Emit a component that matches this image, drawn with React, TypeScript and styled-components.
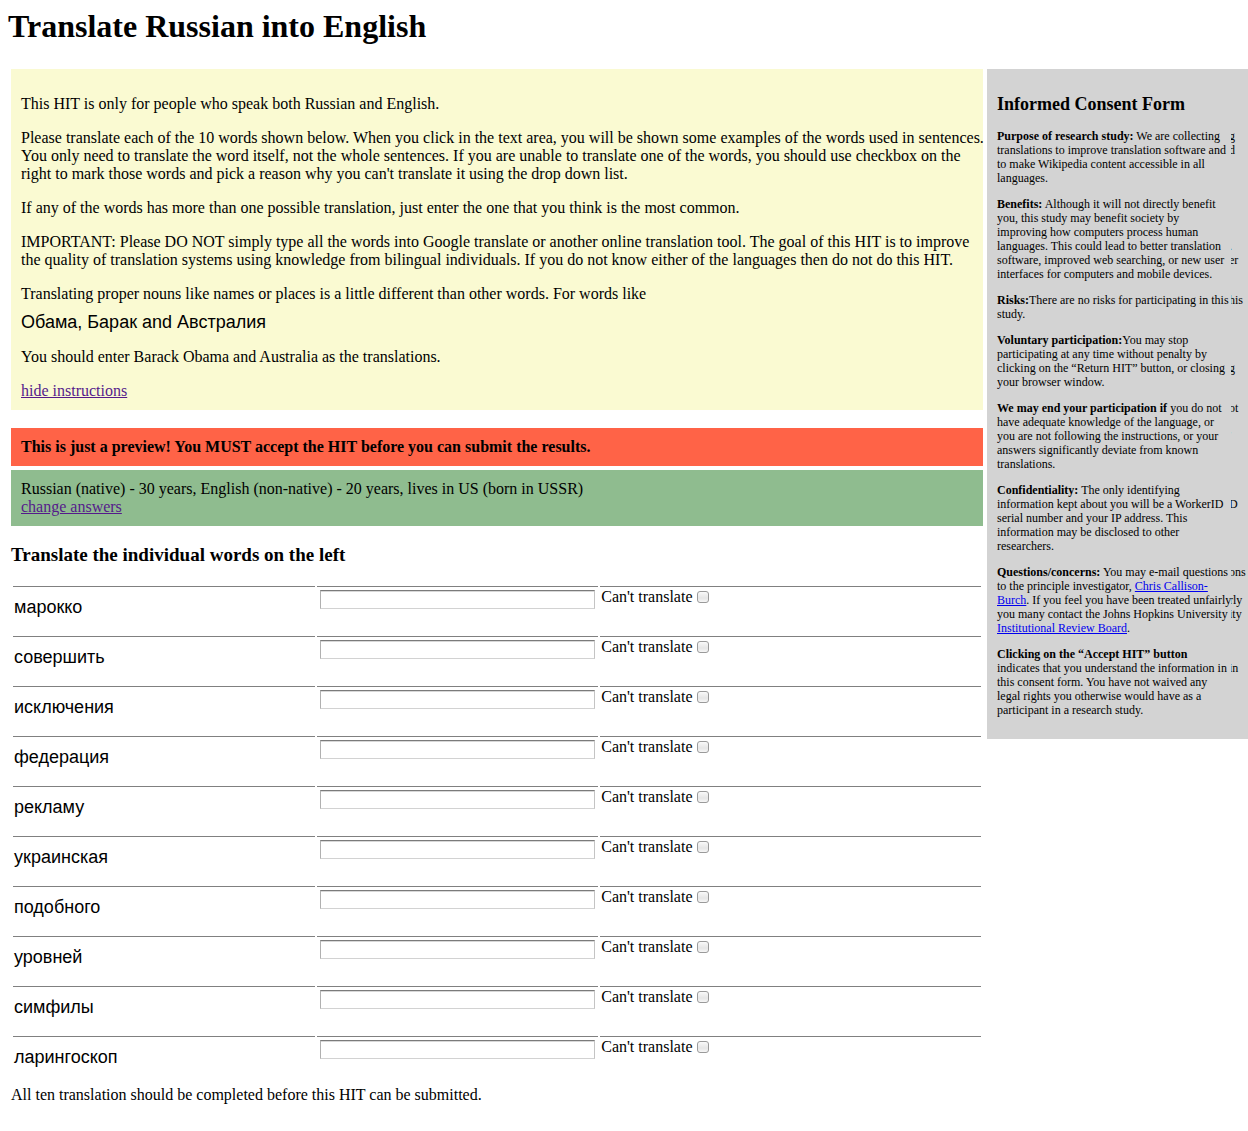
import React from "react";
import styled, { createGlobalStyle } from "styled-components";

const serif = '"Liberation Serif", "Times New Roman", Times, serif';
const sans = '"Liberation Sans", Arial, Helvetica, sans-serif';

const GlobalStyle = createGlobalStyle`
  *, *::before, *::after { box-sizing: border-box; }
  body {
    margin: 0;
    background: #fff;
    color: #000;
    font: 16px/18px ${serif};
  }
`;

const Page = styled.div`
  padding: 8px 0 27px 8px;
`;

const Title = styled.h1`
  margin: 0 0 24px;
  font-size: 32px;
  line-height: 37px;
`;

const Columns = styled.div`
  display: flex;
  align-items: flex-start;
  gap: 4px;
  padding-left: 3px;
`;

const Main = styled.main`
  flex: 1;
  min-width: 0;
`;

const Panel = styled.section<{ $color: string; $gap?: number }>`
  margin-bottom: ${(p) => p.$gap ?? 0}px;
  padding: 10px;
  background: ${(p) => p.$color};
`;

const Instructions = styled(Panel)`
  padding-top: 26px;
  padding-right: 0;
`;

const Paragraph = styled.p`
  margin: 0 -5px 16px 0;
`;

const Examples = styled.p`
  margin: 8px 0 14px;
  font: 18px/23px ${sans};
`;

const Lead = styled.p`
  margin: 0;
`;

const VisitedLink = styled.a`
  color: #551a8b;
`;

const Link = styled.a`
  color: #0000ee;
`;

const Subheading = styled.h3`
  margin: 18px 0;
  font-size: 19px;
  line-height: 22px;
`;

const WordTable = styled.table`
  width: 100%;
  table-layout: fixed;
  border-collapse: separate;
  border-spacing: 2px;
`;

const WordColumn = styled.col`
  width: 31.3%;
`;

const EntryColumn = styled.col`
  width: 29.2%;
`;

const Cell = styled.td`
  height: 48px;
  padding: 1px;
  border-top: 1px solid #808080;
  vertical-align: top;
`;

const WordCell = styled.th`
  height: 48px;
  padding: 10px 1px 0;
  border-top: 1px solid #808080;
  font: 18px/21px ${sans};
  text-align: left;
  vertical-align: top;
`;

const Entry = styled.input`
  display: block;
  width: calc(100% - 4px);
  height: 19px;
  margin: 2px;
  padding: 1px;
  border: 1px solid;
  border-color: #7b7b7b #c4c4c4 #d2d2d2 #b0b0b0;
  border-radius: 0;
  background: #fff;
  box-shadow: inset 0 1px 0 #d8d8d8;
  font: 11px/13px ${sans};
  outline: none;
`;

const CheckLabel = styled.label`
  display: flex;
  align-items: center;
  gap: 4px;
`;

const Check = styled.input`
  appearance: none;
  width: 12px;
  height: 12px;
  margin: 0;
  border: 1px solid #9a9a9a;
  border-radius: 3px;
  background: linear-gradient(#fafafa, #e6e6e6 60%, #f6f6f6);

  &:checked {
    background: #5a8fd8;
  }
`;

const Consent = styled.aside`
  position: relative;
  flex: 0 0 261px;
  padding: 25px 15px 10px 10px;
  background: #d3d3d3;
  font-size: 12px;
  line-height: 14px;
`;

const ConsentTitle = styled.h2`
  margin: 0 0 14px;
  font-size: 18px;
  line-height: 21px;
`;

const ConsentText = styled.p`
  margin: 0 0 12px;
`;

const EdgeStrip = styled.div`
  position: absolute;
  inset: 60px 0 0 auto;
  width: 17px;
  overflow: hidden;
  background: #d3d3d3;
  text-indent: -2px;
`;

const EdgeBlock = styled.div`
  margin-bottom: 12px;
`;

const EdgeLine = styled.div`
  height: 14px;
`;

const words = [
  "марокко",
  "совершить",
  "исключения",
  "федерация",
  "рекламу",
  "украинская",
  "подобного",
  "уровней",
  "симфилы",
  "ларингоскоп",
];

const edgeText = [
  ["g", "d", "", ""],
  ["", "", "", " .", "er", ""],
  ["his", ""],
  ["", "", "g", ""],
  ["ot", "", " '", "", ""],
  ["", "D", "", "", ""],
  ["ons", "", "rly", "ity", ""],
  ["", "in", "", "", ""],
];

function WordRow({ word, id }: { word: string; id: string }) {
  return (
    <tr>
      <WordCell scope="row">
        <label htmlFor={id}>{word}</label>
      </WordCell>
      <Cell>
        <Entry id={id} type="text" />
      </Cell>
      <Cell>
        <CheckLabel>
          Can't translate
          <Check type="checkbox" />
        </CheckLabel>
      </Cell>
    </tr>
  );
}

function ConsentForm() {
  return (
    <Consent>
      <ConsentTitle>Informed Consent Form</ConsentTitle>
      <ConsentText>
        <b>Purpose of research study:</b> We are collecting translations to improve translation
        software and to make Wikipedia content accessible in all languages.
      </ConsentText>
      <ConsentText>
        <b>Benefits:</b> Although it will not directly benefit you, this study may benefit society by
        <br />
        improving how computers process human
        <br />
        languages. This could lead to better translation software, improved web searching, or new
        user interfaces for computers and mobile devices.
      </ConsentText>
      <ConsentText>
        <b>Risks:</b>There are no risks for participating in this study.
      </ConsentText>
      <ConsentText>
        <b>Voluntary participation:</b>You may stop participating at any time without penalty by
        clicking on the “Return HIT” button, or closing your browser window.
      </ConsentText>
      <ConsentText>
        <b>We may end your participation if</b> you do not have adequate knowledge of the language,
        or
        <br />
        you are not following the instructions, or your answers significantly deviate from known
        translations.
      </ConsentText>
      <ConsentText>
        <b>Confidentiality:</b> The only identifying information kept about you will be a WorkerID
        serial number and your IP address. This information may be disclosed to other researchers.
      </ConsentText>
      <ConsentText>
        <b>Questions/concerns:</b> You may e-mail questions to the principle investigator,{" "}
        <Link href="#investigator">Chris Callison-Burch</Link>. If you feel you have been treated
        unfairly you many contact the Johns Hopkins University{" "}
        <Link href="#review-board">Institutional Review Board</Link>.
      </ConsentText>
      <ConsentText>
        <b>Clicking on the “Accept HIT” button</b>
        <br />
        indicates that you understand the information in this consent form. You have not waived any
        <br />
        legal rights you otherwise would have as a participant in a research study.
      </ConsentText>
      <EdgeStrip aria-hidden="true">
        {edgeText.map((block, i) => (
          <EdgeBlock key={i}>
            {block.map((line, j) => (
              <EdgeLine key={j}>{line}</EdgeLine>
            ))}
          </EdgeBlock>
        ))}
      </EdgeStrip>
    </Consent>
  );
}

export default function App() {
  return (
    <>
      <GlobalStyle />
      <Page>
        <Title>Translate Russian into English</Title>
        <Columns>
          <Main>
            <Instructions $color="#fafad2" $gap={18}>
              <Paragraph>This HIT is only for people who speak both Russian and English.</Paragraph>
              <Paragraph>
                Please translate each of the 10 words shown below. When you click in the text area,
                you will be shown some examples of the words used in sentences. You only need to
                translate the word itself, not the whole sentences. If you are unable to translate
                one of the words, you should use checkbox on the right to mark those words and pick
                a reason why you can't translate it using the drop down list.
              </Paragraph>
              <Paragraph>
                If any of the words has more than one possible translation, just enter the one that
                you think is the most common.
              </Paragraph>
              <Paragraph>
                IMPORTANT: Please DO NOT simply type all the words into Google translate or another
                online translation tool. The goal of this HIT is to improve the quality of
                translation systems using knowledge from bilingual individuals. If you do not know
                either of the languages then do not do this HIT.
              </Paragraph>
              <Lead>
                Translating proper nouns like names or places is a little different than other
                words. For words like
              </Lead>
              <Examples>Обама, Барак and Австралия</Examples>
              <Paragraph>You should enter Barack Obama and Australia as the translations.</Paragraph>
              <VisitedLink href="#instructions">hide instructions</VisitedLink>
            </Instructions>
            <Panel $color="#ff6347" $gap={4}>
              <b>This is just a preview! You MUST accept the HIT before you can submit the results.</b>
            </Panel>
            <Panel $color="#8fbc8f">
              <Lead>
                Russian (native) - 30 years, English (non-native) - 20 years, lives in US (born in
                USSR)
              </Lead>
              <VisitedLink href="#answers">change answers</VisitedLink>
            </Panel>
            <Subheading>Translate the individual words on the left</Subheading>
            <WordTable>
              <colgroup>
                <WordColumn />
                <EntryColumn />
                <col />
              </colgroup>
              <tbody>
                {words.map((word, i) => (
                  <WordRow key={word} word={word} id={`word-${i}`} />
                ))}
              </tbody>
            </WordTable>
            <Lead>All ten translation should be completed before this HIT can be submitted.</Lead>
          </Main>
          <ConsentForm />
        </Columns>
      </Page>
    </>
  );
}
